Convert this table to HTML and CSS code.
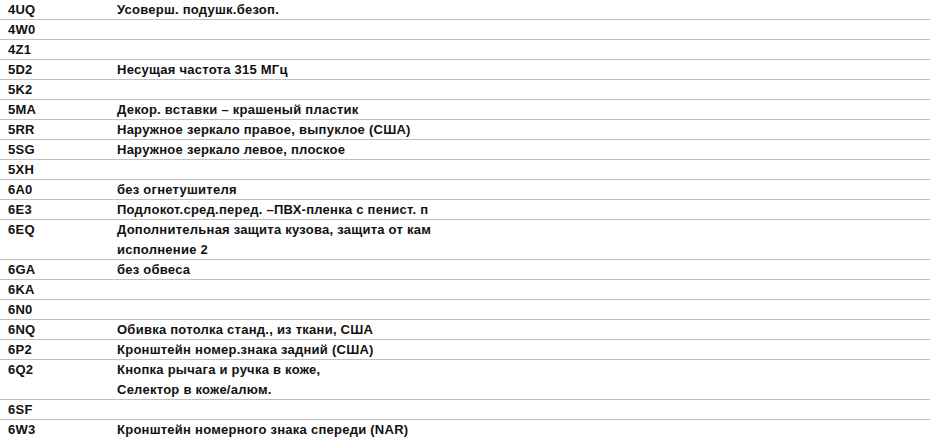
FILE: index.html
```html
<!DOCTYPE html>
<html lang="ru">
<head>
<meta charset="utf-8">
<link rel="stylesheet" href="styles.css">
</head>
<body>
<div class="list">
  <div class="row"><div class="code">4UQ</div><div class="desc">Усоверш. подушк.безоп.</div></div>
  <div class="row"><div class="code">4W0</div><div class="desc"></div></div>
  <div class="row"><div class="code">4Z1</div><div class="desc"></div></div>
  <div class="row"><div class="code">5D2</div><div class="desc">Несущая частота 315 МГц</div></div>
  <div class="row"><div class="code">5K2</div><div class="desc"></div></div>
  <div class="row"><div class="code">5MA</div><div class="desc">Декор. вставки – крашеный пластик</div></div>
  <div class="row"><div class="code">5RR</div><div class="desc">Наружное зеркало правое, выпуклое (США)</div></div>
  <div class="row"><div class="code">5SG</div><div class="desc">Наружное зеркало левое, плоское</div></div>
  <div class="row"><div class="code">5XH</div><div class="desc"></div></div>
  <div class="row"><div class="code">6A0</div><div class="desc">без огнетушителя</div></div>
  <div class="row"><div class="code">6E3</div><div class="desc">Подлокот.сред.перед. –ПВХ-пленка с пенист. п</div></div>
  <div class="row"><div class="code">6EQ</div><div class="desc">Дополнительная защита кузова, защита от кам<br>исполнение 2</div></div>
  <div class="row"><div class="code">6GA</div><div class="desc">без обвеса</div></div>
  <div class="row"><div class="code">6KA</div><div class="desc"></div></div>
  <div class="row"><div class="code">6N0</div><div class="desc"></div></div>
  <div class="row"><div class="code">6NQ</div><div class="desc">Обивка потолка станд., из ткани, США</div></div>
  <div class="row"><div class="code">6P2</div><div class="desc">Кронштейн номер.знака задний (США)</div></div>
  <div class="row"><div class="code">6Q2</div><div class="desc">Кнопка рычага и ручка в коже,<br>Селектор в коже/алюм.</div></div>
  <div class="row"><div class="code">6SF</div><div class="desc"></div></div>
  <div class="row"><div class="code">6W3</div><div class="desc">Кронштейн номерного знака спереди (NAR)</div></div>
</div>
</body>
</html>
```
FILE: styles.css
```css
html, body {
  margin: 0;
  padding: 0;
  background: #ffffff;
}
.list {
  display: flex;
  flex-direction: column;
  width: 930px;
}
.row {
  display: flex;
  font-family: "Liberation Sans", Arial, sans-serif;
  font-weight: bold;
  font-size: 13px;
  letter-spacing: 0.25px;
  line-height: 20px;
  color: #111111;
  box-shadow: inset 0 -1px 0 #c0c0c0;
}
.code {
  width: 109px;
  padding-left: 8px;
  flex: none;
}
.desc {
  flex: 1;
}
```
